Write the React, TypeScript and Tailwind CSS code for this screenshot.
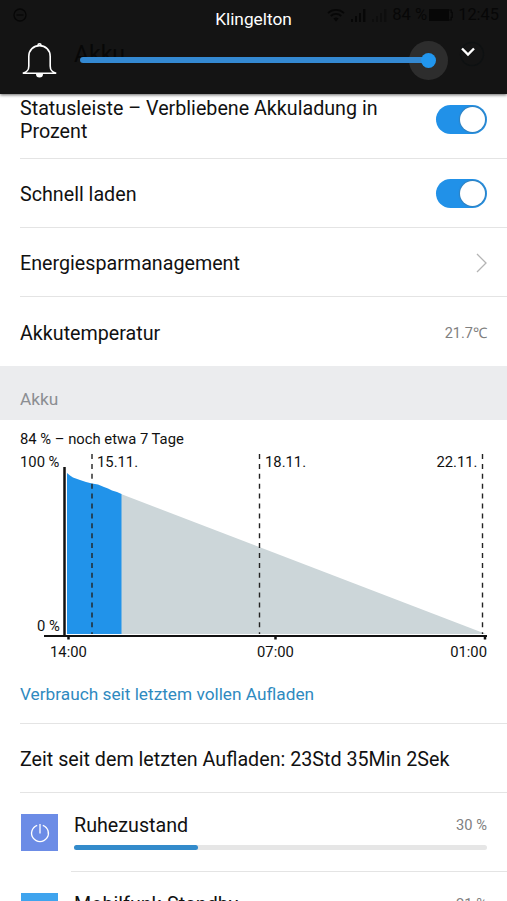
import { useState } from 'react';

type Usage = { name: string; percent: number; icon: 'power' | 'mobile' };

const usages: Usage[] = [
  { name: 'Ruhezustand', percent: 30, icon: 'power' },
  { name: 'Mobilfunk-Standby', percent: 21, icon: 'mobile' },
];

function Toggle({ on, onChange }: { on: boolean; onChange: () => void }) {
  return (
    <button
      onClick={onChange}
      className={`flex h-[29px] w-[51px] shrink-0 items-center rounded-full px-[2px] ${
        on ? 'justify-end bg-[#2191e8]' : 'justify-start bg-gray-300'
      }`}
    >
      <span className="size-[25px] rounded-full bg-white shadow-[0_0_1px_1px_rgba(70,110,140,0.45)]" />
    </button>
  );
}

function StatusBar() {
  return (
    <div className="flex h-[30px] items-center justify-between pl-[13px] pr-[8px] text-[#070707]">
      <svg width="14" height="14" viewBox="0 0 14 14" fill="none" stroke="currentColor" strokeWidth="1.3">
        <circle cx="7" cy="7" r="6" />
        <path d="M3.5 7h7" />
      </svg>
      <div className="flex items-center">
        <svg width="18" height="14" viewBox="0 0 18 14" fill="none" stroke="currentColor" strokeWidth="1.8">
          <path d="M1 5.2a11.5 11.5 0 0 1 16 0M3.8 8a7.5 7.5 0 0 1 10.4 0" />
          <path d="M6.4 10.6a3.8 3.8 0 0 1 5.2 0L9 13.4z" fill="currentColor" stroke="none" />
        </svg>
        <svg className="ml-[6px]" width="15" height="14" viewBox="0 0 15 14" fill="currentColor">
          <path d="M0 11h2v3H0zM4 8h2v6H4zM8 5h2v9H8zM12 1h2.4v13H12z" />
        </svg>
        <svg className="ml-[6px]" width="15" height="14" viewBox="0 0 15 14" fill="currentColor" opacity="0.45">
          <path d="M0 11h2v3H0zM4 8h2v6H4z" />
          <path d="M8 5h2v9H8zM12 1h2.4v13H12z" />
        </svg>
        <span className="ml-[5px] whitespace-pre text-[16.6px] leading-none">84 %</span>
        <svg className="ml-[2px]" width="24" height="14" viewBox="0 0 24 14">
          <path d="M0 1h20v12H0z" fill="currentColor" />
          <path d="M20 2h2.2v2.4h1v5h-1V12H20" fill="none" stroke="currentColor" strokeWidth="1.2" />
        </svg>
        <span className="ml-[5px] text-[16.4px] leading-none">12:45</span>
      </div>
    </div>
  );
}

function VolumePanel() {
  return (
    <div className="absolute inset-x-0 top-0 z-10 h-[94px] bg-[#141414] shadow-[0_1px_3px_rgba(0,0,0,0.6)]">
      {/* app header shimmering through the panel */}
      <div className="absolute inset-0">
        <StatusBar />
        <div className="flex h-[48px] items-center pl-[74px] pr-[22px] text-[#070707]">
          <span className="flex-1 text-[23px] leading-none">Akku</span>
          <svg width="26" height="26" viewBox="0 0 26 26" fill="none" stroke="#0e1112" strokeWidth="1.4">
            <circle cx="13" cy="13" r="11.5" />
          </svg>
        </div>
      </div>

      <div className="relative flex h-full flex-col text-white">
        <div className="flex h-[40px] items-center justify-center text-[17.3px] leading-none">Klingelton</div>
        <div className="flex h-[40px] items-center pl-[22px] pr-[32px]">
          <svg width="36" height="36" viewBox="0 0 36 36" fill="none" stroke="white" strokeWidth="1.6">
            <path d="M0.8 31.2C5 30 6.8 28.5 6.8 24V14.5C6.8 8 11.5 3.6 17.5 3.6S28.2 8 28.2 14.5V24c0 4.5 1.8 6 6 7.2z" />
            <path d="M16 3.2a1.5 1.5 0 0 1 3 0" />
            <path d="M14 32h7a3.5 3.5 0 0 1-7 0z" fill="white" stroke="none" />
          </svg>
          <div className="ml-[22px] flex flex-1 items-center">
            <div className="relative z-10 -mr-[19px] h-[5.5px] flex-1 rounded-l-full bg-[#3489d2]" />
            <div className="flex size-[39px] items-center justify-center rounded-full bg-[#2d2d2d]">
              <div className="relative z-20 size-[15px] rounded-full bg-[#2196ee]" />
            </div>
          </div>
          <svg className="-mt-[17px] ml-[13px]" width="14" height="10" viewBox="0 0 14 10" fill="none" stroke="white" strokeWidth="2.4">
            <path d="M1 1.5l6 6 6-6" />
          </svg>
        </div>
      </div>
    </div>
  );
}

function BatteryChart() {
  return (
    <svg width="507" height="216" viewBox="0 450 507 216" className="block text-[14.8px]" fill="#111">
      <path d="M121 494L486 634H121z" fill="#ccd6d9" />
      <path
        d="M67 473L70 475.5L73 477.5L80 480L86 482L92 483.5L98 484.5L104 487L108 488.5L112 490.5L117 492L121.5 494V634H67z"
        fill="#2193ea"
      />
      <g stroke="#222" strokeWidth="1.4" strokeDasharray="5 4.9">
        <path d="M92 454V634" />
        <path d="M259.5 454V634" />
        <path d="M482.5 454V634" />
      </g>
      <path d="M64.5 467V636" stroke="#111" strokeWidth="2.5" />
      <path d="M44 636H487" stroke="#111" strokeWidth="2.2" />
      <path d="M68.5 636V639.5M275.5 636V639.5M485 636V639.5" stroke="#111" strokeWidth="2.5" />
      <text x="20" y="467">100 %</text>
      <text x="37" y="631">0 %</text>
      <text x="97" y="467">15.11.</text>
      <text x="265" y="467">18.11.</text>
      <text x="477.5" y="467" textAnchor="end">22.11.</text>
      <text x="50" y="657">14:00</text>
      <text x="257" y="657">07:00</text>
      <text x="487" y="657" textAnchor="end">01:00</text>
    </svg>
  );
}

function UsageRow({ usage }: { usage: Usage }) {
  return (
    <div className="flex h-[79px] shrink-0 pl-[21px]">
      <div
        className={`mt-[21px] flex size-[37px] items-center justify-center ${
          usage.icon === 'power' ? 'bg-[#6c8ce6]' : 'bg-[#3fa4ee]'
        }`}
      >
        {usage.icon === 'power' && (
          <svg width="20" height="20" viewBox="0 0 20 20" fill="none" stroke="white" strokeWidth="1.3">
            <path d="M7.2 2.3a8.4 8.4 0 1 0 5.6 0M10 1v9.5" />
          </svg>
        )}
      </div>
      <div className="ml-[13px] flex-1 border-b border-[#e4e4e4] pl-[3px] pr-5">
        <div className="mt-[21px] flex h-6 items-center justify-between">
          <span>{usage.name}</span>
          <span className="pb-[2px] text-[14.7px] text-[#808080]">{usage.percent} %</span>
        </div>
        <div className="mt-[7px] h-[5px] rounded-full bg-[#e6e6e6]">
          <div className="h-full rounded-full bg-[#338bcb]" style={{ width: `${usage.percent}%` }} />
        </div>
      </div>
    </div>
  );
}

function App() {
  const [showPercent, setShowPercent] = useState(true);
  const [fastCharge, setFastCharge] = useState(true);

  return (
    <div className="relative flex h-[901px] w-[507px] flex-col overflow-hidden bg-white font-['Roboto',sans-serif] text-[19.7px] text-[#111]">
      <VolumePanel />

      <div className="mt-[80px] ml-5 flex h-[79px] shrink-0 items-center justify-between border-b border-[#e4e4e4] pr-5">
        <span className="w-[370px] pt-[2px] leading-[23px]">Statusleiste – Verbliebene Akkuladung in Prozent</span>
        <Toggle on={showPercent} onChange={() => setShowPercent(!showPercent)} />
      </div>
      <div className="ml-5 flex h-[69px] shrink-0 items-center justify-between border-b border-[#e4e4e4] pr-5">
        <span className="pt-[3px]">Schnell laden</span>
        <Toggle on={fastCharge} onChange={() => setFastCharge(!fastCharge)} />
      </div>
      <div className="ml-5 flex h-[69px] shrink-0 items-center justify-between border-b border-[#e4e4e4] pt-[2px] pr-5">
        <span className="pt-[2px]">Energiesparmanagement</span>
        <svg width="11" height="20" viewBox="0 0 11 20" fill="none" stroke="#b4b4b4" strokeWidth="1.3">
          <path d="M1 1l9 9-9 9" />
        </svg>
      </div>
      <div className="flex h-[69px] shrink-0 items-center justify-between px-5 pt-[4px]">
        <span>Akkutemperatur</span>
        <span className="text-[14.5px] text-[#808080]">21.7℃</span>
      </div>

      <div className="flex h-[54px] shrink-0 items-end bg-[#ebecee] px-5 pb-[9px] text-[17.3px] leading-6 text-[#8b8e92]">Akku</div>

      <div className="shrink-0">
        <div className="flex h-[30px] items-end px-5 pb-px text-[14.8px] leading-5">84 % – noch etwa 7 Tage</div>
        <BatteryChart />
        <div className="ml-5 flex h-[58px] items-center border-b border-[#e4e4e4] text-[17.25px] text-[#2f8abf]">
          Verbrauch seit letztem vollen Aufladen
        </div>
      </div>

      <div className="ml-5 flex h-[69px] shrink-0 items-center border-b border-[#e4e4e4] pt-[3px]">
        Zeit seit dem letzten Aufladen: 23Std 35Min 2Sek
      </div>

      {usages.map((usage) => (
        <UsageRow key={usage.name} usage={usage} />
      ))}
    </div>
  );
}

export default App;
